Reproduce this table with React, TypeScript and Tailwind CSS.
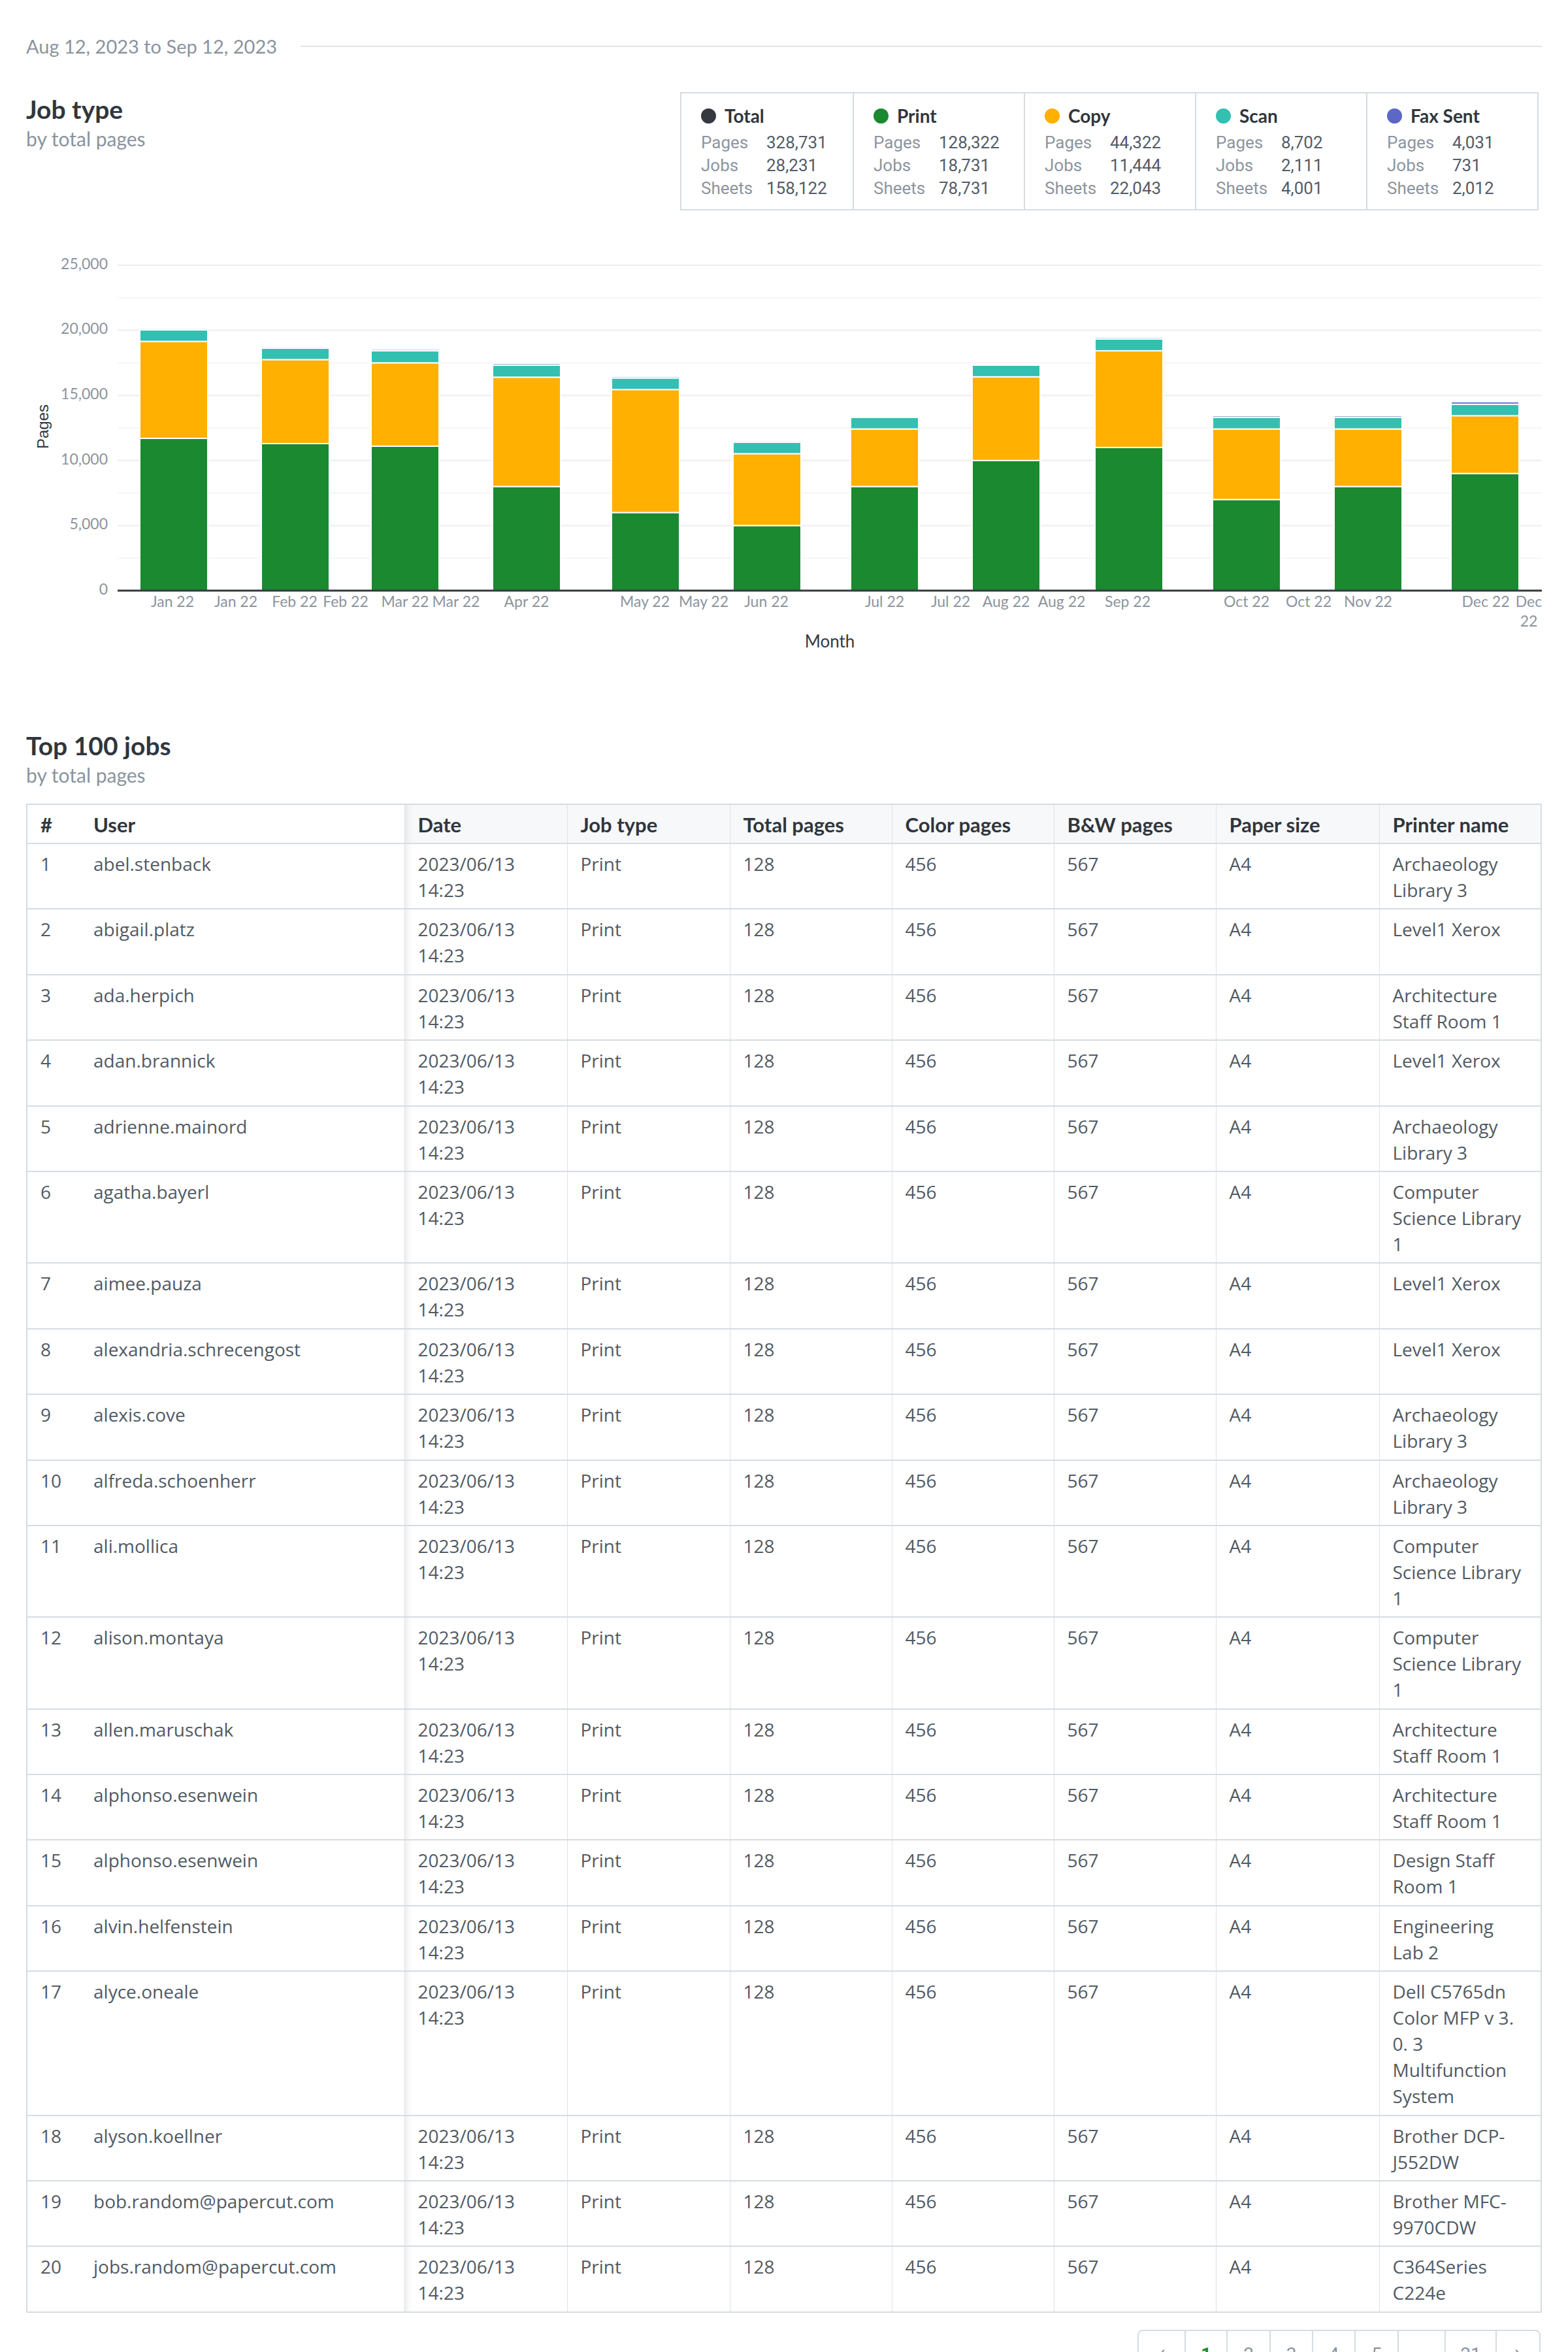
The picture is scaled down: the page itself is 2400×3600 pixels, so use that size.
import { ChevronLeft, ChevronRight } from "lucide-react";

const stats = [
  { name: "Total", color: "#343a40", pages: "328,731", jobs: "28,231", sheets: "158,122" },
  { name: "Print", color: "#1b892f", pages: "128,322", jobs: "18,731", sheets: "78,731" },
  { name: "Copy", color: "#ffb000", pages: "44,322", jobs: "11,444", sheets: "22,043" },
  { name: "Scan", color: "#33c0b0", pages: "8,702", jobs: "2,111", sheets: "4,001" },
  { name: "Fax Sent", color: "#5c67c6", pages: "4,031", jobs: "731", sheets: "2,012" },
];

// left edge of each month's bar, in page pixels
const bars = [
  { x: 214, print: 11700, copy: 7450, scan: 880, fax: 110, faxColor: "#aab1e3" },
  { x: 400, print: 11300, copy: 6450, scan: 880, fax: 110, faxColor: "#aab1e3" },
  { x: 568, print: 11100, copy: 6400, scan: 930, fax: 130, faxColor: "#aab1e3" },
  { x: 754, print: 8000, copy: 8400, scan: 920, fax: 130, faxColor: "#5c67c6" },
  { x: 936, print: 6000, copy: 9450, scan: 890, fax: 130, faxColor: "#aab1e3" },
  { x: 1122, print: 5000, copy: 5520, scan: 890, fax: 60, faxColor: "#aab1e3" },
  { x: 1302, print: 8000, copy: 4420, scan: 900, fax: 90, faxColor: "#5c67c6" },
  { x: 1488, print: 10000, copy: 6430, scan: 900, fax: 90, faxColor: "#aab1e3" },
  { x: 1676, print: 11000, copy: 7430, scan: 910, fax: 130, faxColor: "#aab1e3" },
  { x: 1856, print: 7000, copy: 5420, scan: 900, fax: 130, faxColor: "#5c67c6" },
  { x: 2042, print: 8000, copy: 4420, scan: 900, fax: 130, faxColor: "#5c67c6" },
  { x: 2221, print: 9000, copy: 4440, scan: 880, fax: 190, faxColor: "#5c67c6" },
];

const ticks = [
  { x: 264, t: "Jan 22" },
  { x: 361, t: "Jan 22" },
  { x: 451, t: "Feb 22" },
  { x: 529, t: "Feb 22" },
  { x: 620, t: "Mar 22" },
  { x: 698, t: "Mar 22" },
  { x: 806, t: "Apr 22" },
  { x: 987, t: "May 22" },
  { x: 1077, t: "May 22" },
  { x: 1173, t: "Jun 22" },
  { x: 1354, t: "Jul 22" },
  { x: 1455, t: "Jul 22" },
  { x: 1540, t: "Aug 22" },
  { x: 1625, t: "Aug 22" },
  { x: 1726, t: "Sep 22" },
  { x: 1908, t: "Oct 22" },
  { x: 2003, t: "Oct 22" },
  { x: 2094, t: "Nov 22" },
  { x: 2274, t: "Dec 22" },
];

const jobs: [string, string[]][] = [
  ["abel.stenback", ["Archaeology", "Library 3"]],
  ["abigail.platz", ["Level1 Xerox"]],
  ["ada.herpich", ["Architecture", "Staff Room 1"]],
  ["adan.brannick", ["Level1 Xerox"]],
  ["adrienne.mainord", ["Archaeology", "Library 3"]],
  ["agatha.bayerl", ["Computer", "Science Library", "1"]],
  ["aimee.pauza", ["Level1 Xerox"]],
  ["alexandria.schrecengost", ["Level1 Xerox"]],
  ["alexis.cove", ["Archaeology", "Library 3"]],
  ["alfreda.schoenherr", ["Archaeology", "Library 3"]],
  ["ali.mollica", ["Computer", "Science Library", "1"]],
  ["alison.montaya", ["Computer", "Science Library", "1"]],
  ["allen.maruschak", ["Architecture", "Staff Room 1"]],
  ["alphonso.esenwein", ["Architecture", "Staff Room 1"]],
  ["alphonso.esenwein", ["Design Staff", "Room 1"]],
  ["alvin.helfenstein", ["Engineering", "Lab 2"]],
  ["alyce.oneale", ["Dell C5765dn", "Color MFP v 3.", "0. 3", "Multifunction", "System"]],
  ["alyson.koellner", ["Brother DCP-", "J552DW"]],
  ["bob.random@papercut.com", ["Brother MFC-", "9970CDW"]],
  ["jobs.random@papercut.com", ["C364Series", "C224e"]],
];

function JobTypeChart() {
  const y = (v: number) => 533 - v * 0.01992;
  const grid = [0, 2500, 5000, 7500, 10000, 12500, 15000, 17500, 20000, 22500, 25000];
  return (
    <svg width="2320" height="640" viewBox="0 0 2320 640" className="mt-[49px] block">
      {grid.map((v) => (
        <line
          key={v}
          x1="140"
          x2="2320"
          y1={y(v)}
          y2={y(v)}
          stroke={v % 5000 === 0 ? "#eceef1" : "#f5f6f8"}
          strokeWidth="2"
        />
      ))}
      {grid
        .filter((v) => v % 5000 === 0)
        .map((v) => (
          <text
            key={v}
            x="125"
            y={y(v)}
            textAnchor="end"
            dominantBaseline="middle"
            fill="#8b949e"
            fontSize="23"
            fontFamily="Lato, sans-serif"
          >
            {v.toLocaleString("en-US")}
          </text>
        ))}
      <text
        x="28"
        y="282"
        transform="rotate(-90 28 282)"
        textAnchor="middle"
        dominantBaseline="middle"
        fill="#343a40"
        fontSize="24"
        fontFamily="'Liberation Sans', Arial, sans-serif"
      >
        Pages
      </text>

      {bars.map((b) => {
        const x = b.x - 40;
        const p = b.print;
        const c = p + b.copy;
        const s = c + b.scan;
        const f = s + b.fax;
        return (
          <g key={b.x} stroke="#fff" strokeWidth="2">
            <rect x={x} width="104" y={y(p)} height={y(0) - y(p)} fill="#1b892f" />
            <rect x={x} width="104" y={y(c)} height={y(p) - y(c)} fill="#ffb000" />
            <rect x={x} width="104" y={y(s)} height={y(c) - y(s)} fill="#33c0b0" />
            <rect x={x} width="104" y={y(f)} height={y(s) - y(f)} fill={b.faxColor} />
          </g>
        );
      })}

      <line x1="140" x2="2320" y1="533" y2="533" stroke="#343a40" strokeWidth="3" />

      {ticks.map((t, i) => (
        <text
          key={i}
          x={t.x - 40}
          y="552"
          textAnchor="middle"
          dominantBaseline="middle"
          fill="#8b949e"
          fontSize="23"
          fontFamily="Lato, sans-serif"
        >
          {t.t}
        </text>
      ))}
      <text x="2300" y="552" textAnchor="middle" dominantBaseline="middle" fill="#8b949e" fontSize="23" fontFamily="Lato, sans-serif">
        Dec
      </text>
      <text x="2300" y="582" textAnchor="middle" dominantBaseline="middle" fill="#8b949e" fontSize="23" fontFamily="Lato, sans-serif">
        22
      </text>

      <text x="1230" y="613" textAnchor="middle" dominantBaseline="middle" fill="#343a40" fontSize="26" fontFamily="Lato, sans-serif">
        Month
      </text>
    </svg>
  );
}

function StatBox() {
  return (
    <div className="mr-[5px] flex border-2 border-[#d6dce2]">
      {stats.map((s, i) => (
        <div
          key={s.name}
          className={`w-[262px] pl-[30px] pt-[16px] pb-[14px] ${i > 0 ? "border-l-2 border-[#d6dce2]" : ""}`}
        >
          <div className="flex items-center gap-[13px] font-[Lato,sans-serif] text-[28px] leading-[36px] font-bold text-[#30363c]">
            <span className="h-[23px] w-[23px] rounded-full" style={{ backgroundColor: s.color }} />
            {s.name}
          </div>
          <div className="mt-[6px] font-[Roboto,sans-serif] text-[26px] leading-[35px]">
            {[
              ["Pages", s.pages],
              ["Jobs", s.jobs],
              ["Sheets", s.sheets],
            ].map(([label, value]) => (
              <div key={label} className="flex">
                <span className="w-[100px] text-[#8d959e]">{label}</span>
                <span className="text-[#535c66]">{value}</span>
              </div>
            ))}
          </div>
        </div>
      ))}
    </div>
  );
}

function SectionTitle({ title }: { title: string }) {
  return (
    <div className="font-[Lato,sans-serif]">
      <h2 className="text-[39px] leading-[48px] font-bold text-[#30363c]">{title}</h2>
      <p className="mt-[3px] text-[30px] leading-[36px] text-[#8a949e]">by total pages</p>
    </div>
  );
}

const th = "border-b-2 border-[#d6dce2] px-[20px] pt-[10px] pb-[8px] text-left font-[Lato,sans-serif] text-[31px] leading-[40px] font-bold text-[#30363c]";
const td = "border-b-2 border-[#d6dce2] px-[20px] pt-[10px] pb-[8.4px] align-top";
const vline = "border-l border-l-[#dde2e7]";
const stickyShadow = "shadow-[inset_14px_0_12px_-12px_rgba(0,0,0,0.10)]";

function JobsTable() {
  const cols = ["Date", "Job type", "Total pages", "Color pages", "B&W pages", "Paper size", "Printer name"];
  return (
    <table className="mt-[26px] w-[2318px] table-fixed border-collapse border-2 border-[#d6dce2]">
      <colgroup>
        <col className="w-[82px]" />
        <col className="w-[496px]" />
        <col className="w-[249px]" />
        <col className="w-[249px]" />
        <col className="w-[248px]" />
        <col className="w-[248px]" />
        <col className="w-[248px]" />
        <col className="w-[250px]" />
        <col className="w-[248px]" />
      </colgroup>
      <thead>
        <tr>
          <th className={`${th} bg-white`}>#</th>
          <th className={`${th} bg-white`}>User</th>
          {cols.map((c, i) => (
            <th key={c} className={`${th} ${vline} bg-[#f7f8fa] ${i === 0 ? stickyShadow : ""}`}>
              {c}
            </th>
          ))}
        </tr>
      </thead>
      <tbody className="font-['Open_Sans',sans-serif] text-[28px] leading-[40px] text-[#515a64]">
        {jobs.map(([user, printer], i) => (
          <tr key={i}>
            <td className={td}>{i + 1}</td>
            <td className={td}>{user}</td>
            <td className={`${td} ${vline} ${stickyShadow}`}>
              <div>2023/06/13</div>
              <div>14:23</div>
            </td>
            <td className={`${td} ${vline}`}>Print</td>
            <td className={`${td} ${vline}`}>128</td>
            <td className={`${td} ${vline}`}>456</td>
            <td className={`${td} ${vline}`}>567</td>
            <td className={`${td} ${vline}`}>A4</td>
            <td className={`${td} ${vline}`}>
              {printer.map((line, j) => (
                <div key={j} className="whitespace-nowrap">
                  {line}
                </div>
              ))}
            </td>
          </tr>
        ))}
      </tbody>
    </table>
  );
}

function Pagination() {
  const items = [
    { w: "w-[70px]", c: <ChevronLeft className="h-[26px] w-[26px]" strokeWidth={2} /> },
    { w: "w-[64px]", c: "1", active: true },
    { w: "w-[66px]", c: "2" },
    { w: "w-[65px]", c: "3" },
    { w: "w-[65px]", c: "4" },
    { w: "w-[66px]", c: "5" },
    { w: "w-[72px]", c: "..." },
    { w: "w-[78px]", c: "21" },
    { w: "w-[67px]", c: <ChevronRight className="h-[26px] w-[26px]" strokeWidth={2} /> },
  ];
  return (
    <div className="mt-[26px] mr-[2px] ml-auto flex h-[76px] overflow-hidden rounded-[8px] border-2 border-[#d6dce2] font-[Roboto,sans-serif] text-[28px]">
      {items.map((it, i) => (
        <div
          key={i}
          className={`flex items-center justify-center ${it.w} ${i > 0 ? "border-l-2 border-[#d6dce2]" : ""} ${
            it.active ? "font-bold text-[#1b892f]" : "text-[#8a949e]"
          }`}
        >
          {it.c}
        </div>
      ))}
    </div>
  );
}

export default function App() {
  return (
    <main className="min-h-screen w-[2400px] bg-white px-[40px] pt-[51px] pb-[40px]">
      <div className="flex items-center">
        <span className="font-[Lato,sans-serif] text-[29px] leading-[40px] text-[#8a949e]">
          Aug 12, 2023 to Sep 12, 2023
        </span>
        <div className="ml-[36px] h-[2px] flex-1 bg-[#dfe3e7]" />
      </div>

      <section className="mt-[50px]">
        <div className="flex items-start justify-between">
          <div className="pt-[2px]">
            <SectionTitle title="Job type" />
          </div>
          <StatBox />
        </div>
        <JobTypeChart />
      </section>

      <section className="mt-[106px] flex flex-col">
        <SectionTitle title="Top 100 jobs" />
        <JobsTable />
        <Pagination />
      </section>
    </main>
  );
}
